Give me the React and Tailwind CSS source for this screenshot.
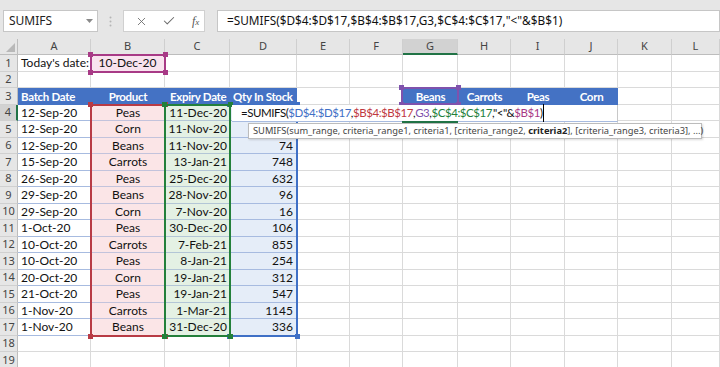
import React from 'react';
import { X, Check } from 'lucide-react';

const W = ['w-[18px]','w-[73px]','w-[74px]','w-[65px]','w-[67px]','w-[53px]','w-[53px]','w-[55px]','w-[53px]','w-[54px]','w-[53px]','w-[54px]','w-[48px]'];
const LETTERS = ['A','B','C','D','E','F','G','H','I','J','K','L',''];

const DATA = [
  ['12-Sep-20','Peas','11-Dec-20',''],
  ['12-Sep-20','Corn','11-Nov-20',''],
  ['12-Sep-20','Beans','11-Nov-20','74'],
  ['15-Sep-20','Carrots','13-Jan-21','748'],
  ['26-Sep-20','Peas','25-Dec-20','632'],
  ['29-Sep-20','Beans','28-Nov-20','96'],
  ['29-Sep-20','Corn','7-Nov-20','16'],
  ['1-Oct-20','Peas','30-Dec-20','106'],
  ['10-Oct-20','Carrots','7-Feb-21','855'],
  ['10-Oct-20','Peas','8-Jan-21','254'],
  ['20-Oct-20','Corn','19-Jan-21','312'],
  ['21-Oct-20','Peas','19-Jan-21','547'],
  ['1-Nov-20','Carrots','1-Mar-21','1145'],
  ['1-Nov-20','Beans','31-Dec-20','336'],
];

const GRID = 'border-r border-b border-[#dadada]';
const HEAD = 'bg-[#4472c4] text-white font-bold text-[11.5px] tracking-[-0.3px]';
const cellFont = { fontFamily: 'Lato, "Liberation Sans", sans-serif' };

function Cell({ i, className = '', children }) {
  return (
    <div className={`${W[i]} shrink-0 h-full flex items-center overflow-visible whitespace-nowrap ${className}`}>
      {children}
    </div>
  );
}

function RowHead({ n, active }) {
  return (
    <div
      className={`w-[18px] shrink-0 h-full flex items-center justify-center text-[11px] text-[#444] border-b border-[#d0d0d0] ${active ? 'bg-[#d2d2d2] border-r-2 border-r-[#217346]' : 'bg-[#e6e6e6] border-r border-r-[#bdbdbd]'}`}
      style={{ fontFamily: '"Noto Sans", sans-serif' }}
    >
      {n}
    </div>
  );
}

function Row({ n, children }) {
  return (
    <div className={`flex ${n % 2 === 1 ? 'h-[17px]' : 'h-[16px]'}`}>
      <RowHead n={n} active={n === 4} />
      {children}
    </div>
  );
}

function Empty({ from }) {
  const out = [];
  for (let i = from; i <= 12; i++) out.push(<Cell key={i} i={i} className={GRID} />);
  return out;
}

function RangeBox({ left, top, width, height, color }) {
  const sq = 'absolute w-[5px] h-[5px]';
  return (
    <div className="absolute pointer-events-none" style={{ left, top, width, height }}>
      <div className="absolute inset-0 border-2" style={{ borderColor: color }} />
      <div className={`${sq} -left-[2px] -top-[2px]`} style={{ background: color }} />
      <div className={`${sq} -right-[2px] -top-[2px]`} style={{ background: color }} />
      <div className={`${sq} -left-[2px] -bottom-[2px]`} style={{ background: color }} />
      <div className={`${sq} -right-[2px] -bottom-[2px]`} style={{ background: color }} />
    </div>
  );
}

export default function App() {
  return (
    <div className="relative w-[720px] h-[367px] overflow-hidden bg-white text-[#111]" style={cellFont}>
      {/* Formula bar area */}
      <div className="h-[39px] bg-[#e6e6e6] flex items-start pt-[10px]" style={{ fontFamily: '"Noto Sans", "Open Sans", sans-serif' }}>
        <div className="ml-[3px] w-[95px] h-[22px] bg-white border border-[#c6c6c6] flex items-center pl-[5px] pr-[4px] text-[12px] text-[#222]">
          <span className="flex-1">SUMIFS</span>
          <svg width="7" height="4" viewBox="0 0 7 4"><path d="M0 0h7L3.5 4z" fill="#8a8a8a" /></svg>
        </div>
        <div className="w-[25px] h-[22px] flex items-center justify-center">
          <svg width="3" height="11" viewBox="0 0 3 11"><circle cx="1.5" cy="1.5" r="1" fill="#b5b5b5" /><circle cx="1.5" cy="5.5" r="1" fill="#b5b5b5" /><circle cx="1.5" cy="9.5" r="1" fill="#b5b5b5" /></svg>
        </div>
        <div className="w-[82px] h-[22px] bg-white border border-[#d0d0d0] flex items-center pl-[11px]">
          <X size={13} strokeWidth={1.6} color="#6b6b6b" />
          <Check size={14} strokeWidth={1.8} color="#6b6b6b" className="ml-[14px]" />
          <span className="ml-[16px] text-[12px] italic text-[#555] leading-none" style={{ fontFamily: '"Liberation Serif", serif' }}>f<span className="text-[9px]">x</span></span>
        </div>
        <div className="ml-[12px] flex-1 h-[22px] bg-white border border-[#c6c6c6] flex items-center pl-[9px] text-[11.8px] text-[#111] whitespace-nowrap">
          =SUMIFS($D$4:$D$17,$B$4:$B$17,G3,$C$4:$C$17,"&lt;"&amp;$B$1)
        </div>
      </div>

      {/* Column headers */}
      <div className="flex h-[16px] bg-[#e6e6e6]" style={{ fontFamily: '"Noto Sans", sans-serif' }}>
        <div className="w-[18px] shrink-0 h-full border-r border-b border-[#bdbdbd] flex items-end justify-end p-[2px]">
          <svg width="9" height="9" viewBox="0 0 9 9"><path d="M9 0V9H0z" fill="#b8b8b8" /></svg>
        </div>
        {LETTERS.slice(0, 12).map((l, idx) => (
          <div
            key={l}
            className={`${W[idx + 1]} shrink-0 h-full flex items-center justify-center text-[11px] text-[#444] border-r border-r-[#cfcfcf] ${l === 'G' ? 'bg-[#d2d2d2] border-b-2 border-b-[#217346]' : 'border-b border-b-[#bdbdbd]'}`}
          >
            {l}
          </div>
        ))}
      </div>

      {/* Row 1 */}
      <Row n={1}>
        <Cell i={1} className={`${GRID} pl-[3px] text-[12px]`}>Today's date:</Cell>
        <Cell i={2} className={`${GRID} bg-[#f8e3ee] justify-center text-[12px]`}>10-Dec-20</Cell>
        <Empty from={3} />
      </Row>
      <Row n={2}><Empty from={1} /></Row>
      <Row n={3}>
        <Cell i={1} className={`${HEAD} pl-[3px]`}>Batch Date</Cell>
        <Cell i={2} className={`${HEAD} justify-center`}>Product</Cell>
        <Cell i={3} className={`${HEAD} pl-[5px]`}>Expiry Date</Cell>
        <Cell i={4} className={`${HEAD} pl-[3px]`}>Qty In Stock</Cell>
        <Cell i={5} className={GRID} />
        <Cell i={6} className={GRID} />
        <Cell i={7} className={`${HEAD} justify-center`}>Beans</Cell>
        <Cell i={8} className={`${HEAD} justify-center`}>Carrots</Cell>
        <Cell i={9} className={`${HEAD} justify-center`}>Peas</Cell>
        <Cell i={10} className={`${HEAD} justify-center`}>Corn</Cell>
        <Cell i={11} className={GRID} />
        <Cell i={12} className={GRID} />
      </Row>
      {DATA.map((r, k) => (
        <Row key={k} n={k + 4}>
          <Cell i={1} className="border-b border-[#a7bbe0] pl-[3px] text-[12px]">{r[0]}</Cell>
          <Cell i={2} className="bg-[#fbe5e7] border-b border-[#c3c3dc] justify-center text-[12px]">{r[1]}</Cell>
          <Cell i={3} className="bg-[#e4f1e4] border-b border-[#b3c6d6] justify-end pr-[3px] text-[12px]">{r[2]}</Cell>
          <Cell i={4} className="bg-[#e5edf8] border-b border-[#a7bbe0] justify-end pr-[4px] text-[12px]">{r[3]}</Cell>
          <Empty from={5} />
        </Row>
      ))}
      <Row n={18}><Empty from={1} /></Row>
      <Row n={19}><Empty from={1} /></Row>

      {/* Range reference highlights */}
      <RangeBox left={90} top={54} width={76} height={19} color="#a83a86" />
      <RangeBox left={401} top={87} width={58} height={18} color="#7f52ad" />
      <RangeBox left={90} top={104} width={76} height={233} color="#b83b45" />
      <RangeBox left={229} top={104} width={69} height={233} color="#3f70c6" />
      <RangeBox left={164} top={104} width={67} height={233} color="#23803b" />

      {/* In-cell editor */}
      <div className="absolute left-[232px] top-[105px] w-[386px] h-[17px] bg-white border-r border-b border-r-[#c8c8c8] border-b-[#a7bbe0] flex items-center pl-[9px] text-[11.5px] tracking-[-0.45px] whitespace-nowrap">
        <span>=SUMIFS(</span>
        <span className="text-[#3f70c6]">$D$4:$D$17</span>
        <span>,</span>
        <span className="text-[#c0393f]">$B$4:$B$17</span>
        <span>,</span>
        <span className="text-[#7f52ad]">G3</span>
        <span>,</span>
        <span className="text-[#23803b]">$C$4:$C$17</span>
        <span>,"&lt;"&amp;</span>
        <span className="text-[#a83a86]">$B$1</span>
        <span className="border-r border-black">)</span>
      </div>
      <div className="absolute left-[402px] top-[121px] w-[56px] h-[2px] bg-[#217346]" />

      {/* Tooltip */}
      <div
        className="absolute left-[248px] top-[123px] w-[454px] h-[16px] bg-white border border-[#bcbcbc] shadow-[1px_1px_2px_rgba(0,0,0,0.15)] flex items-center pl-[4px] text-[9.3px] text-[#444] whitespace-nowrap"
        style={{ fontFamily: '"Noto Sans", "Open Sans", sans-serif' }}
      >
        SUMIFS(sum_range, criteria_range1, criteria1, [criteria_range2,&nbsp;<b className="text-[#222]">criteria2</b>], [criteria_range3, criteria3], ...)
      </div>
    </div>
  );
}
